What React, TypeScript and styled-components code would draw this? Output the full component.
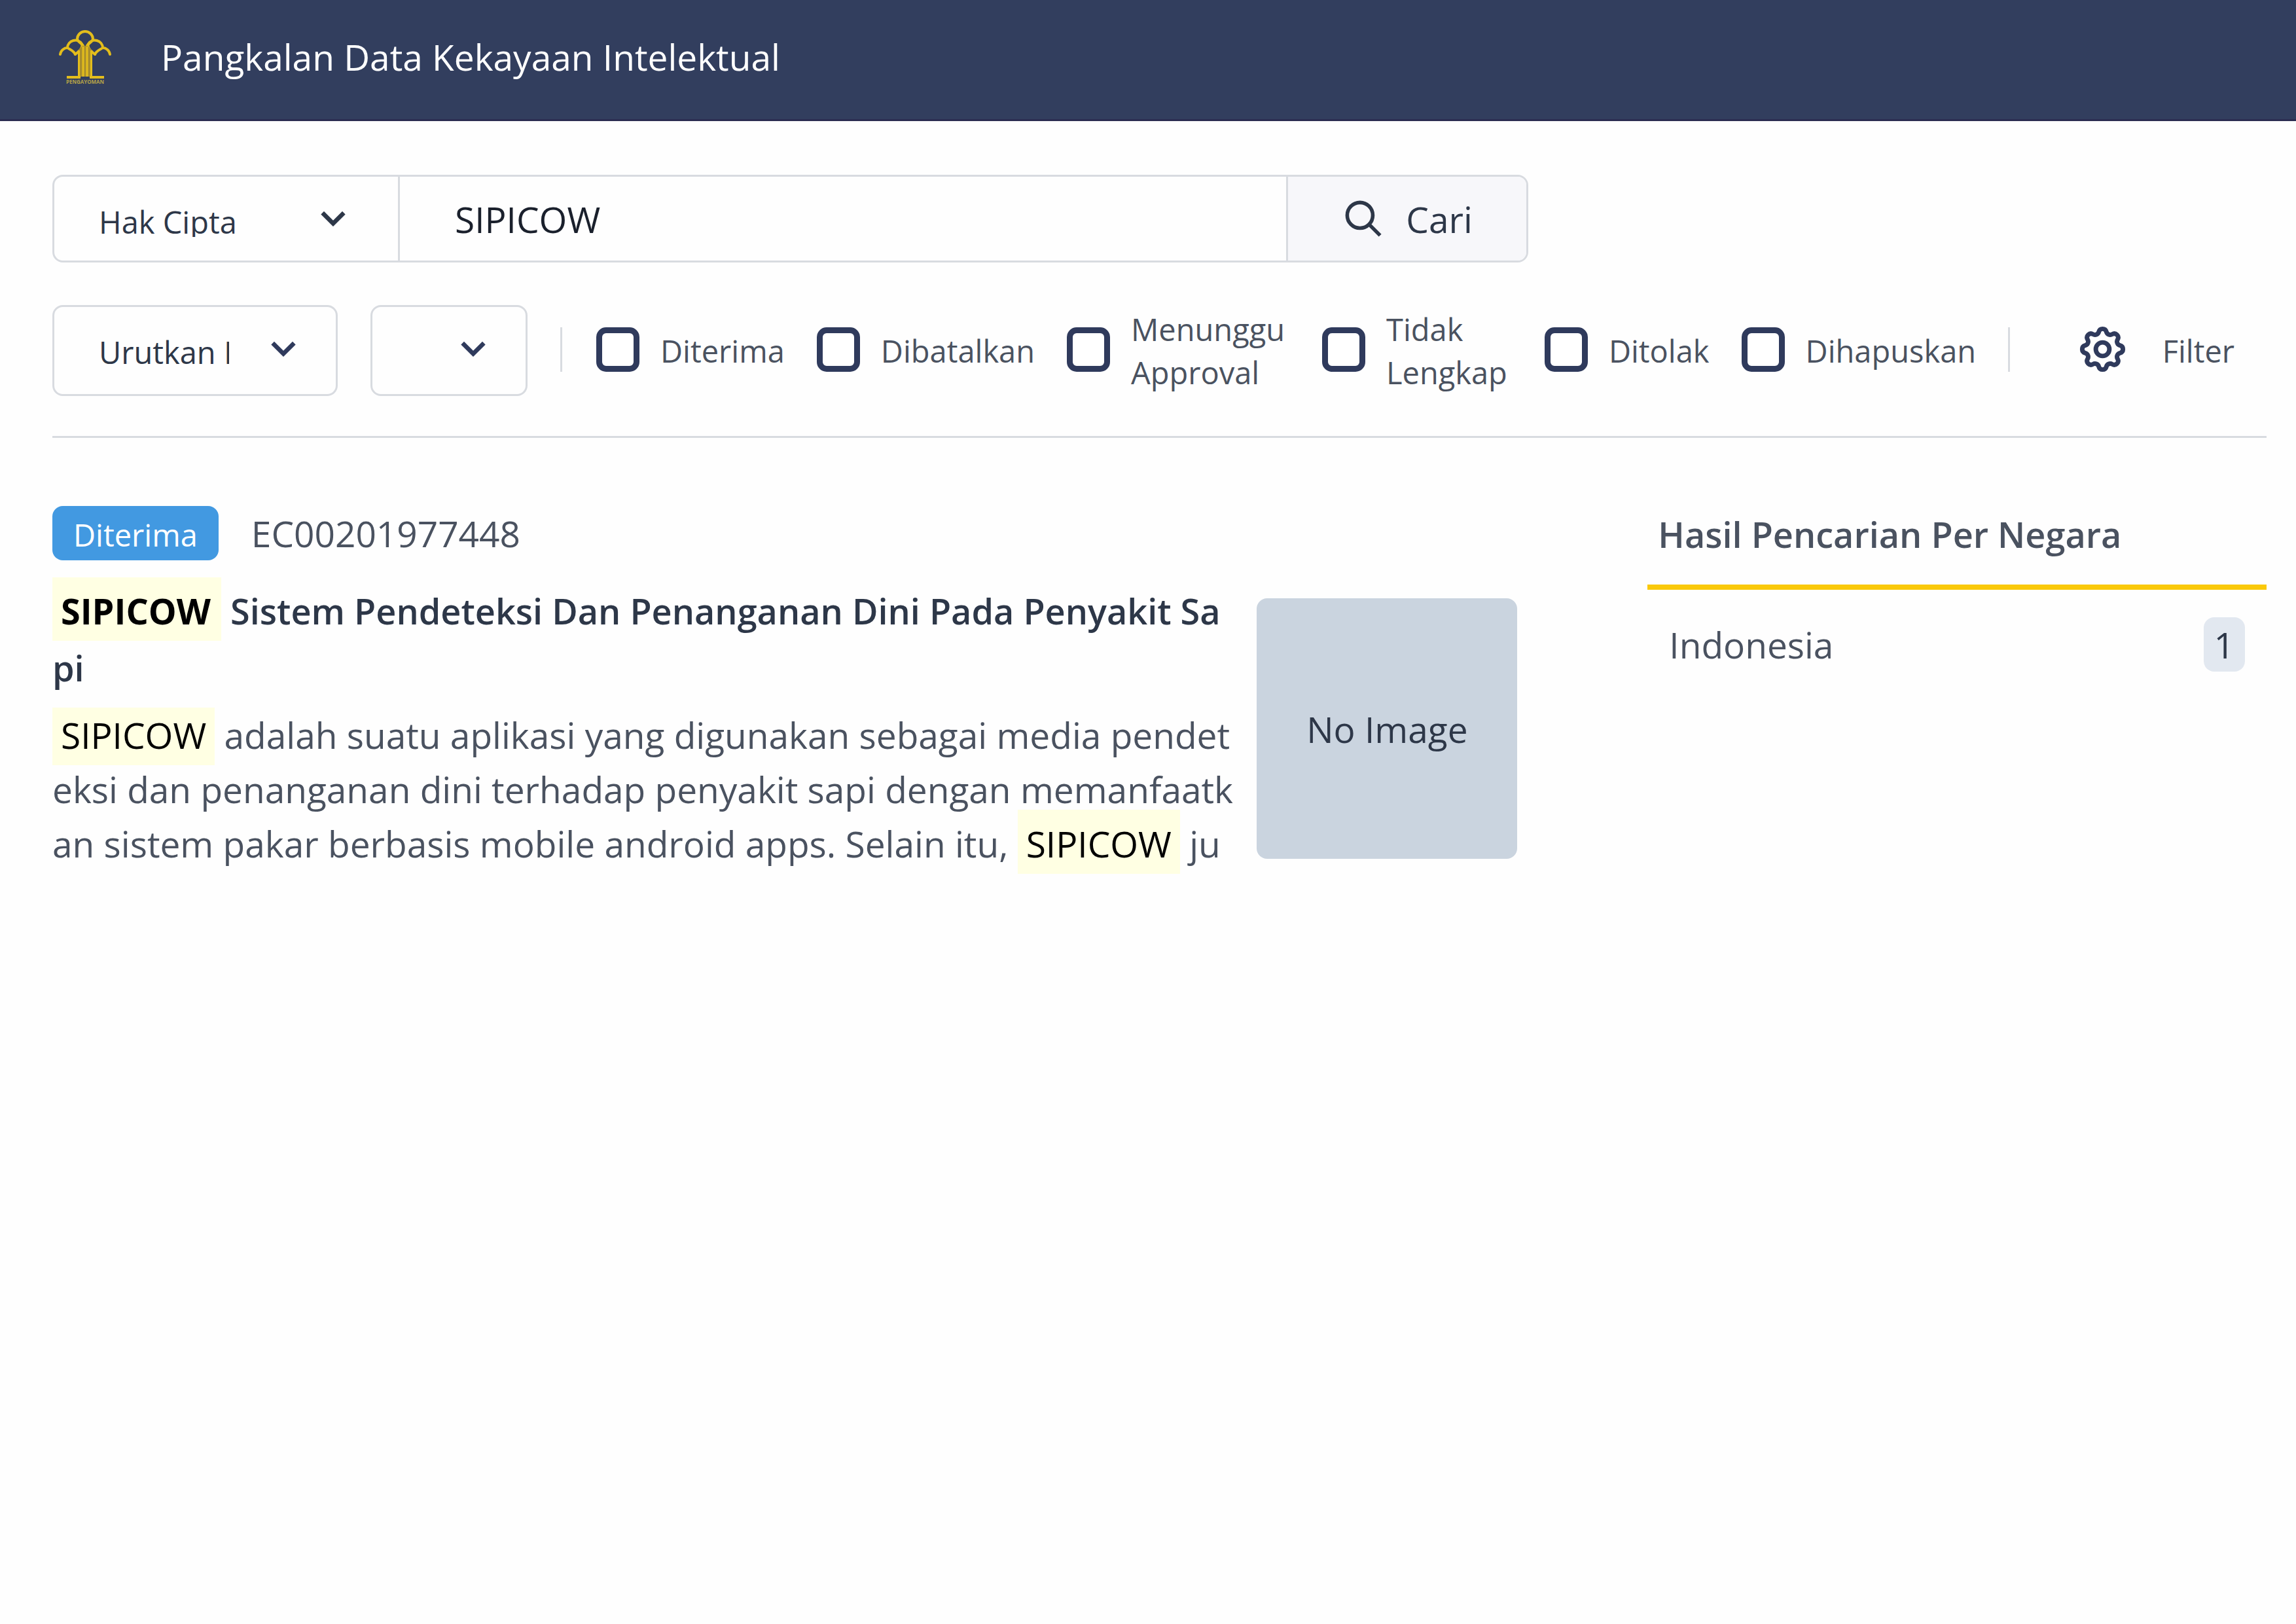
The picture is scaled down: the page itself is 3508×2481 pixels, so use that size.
import React from "react";
import styled, { createGlobalStyle } from "styled-components";

const ink = "#2d3748";
const muted = "#4a5260";
const navy = "#2f3a5c";
const line = "#d8dbe0";
const fontStack = '"Open Sans", "Noto Sans", sans-serif';

const GlobalStyle = createGlobalStyle`
  *, *::before, *::after { box-sizing: border-box; }
  body {
    margin: 0;
    background: #fefefe;
    color: ${ink};
    font-family: ${fontStack};
    font-size: 55px;
    line-height: 83px;
  }
  h1, h2, h3, p, ul { margin: 0; padding: 0; }
  button, input, select { font-family: inherit; margin: 0; }
`;

const Header = styled.header`
  display: flex;
  align-items: center;
  gap: 74px;
  padding: 45px 90px 54px;
  background: #323e5e;
  border-bottom: 3px solid #2b2d52;
`;

const Emblem = styled.svg`
  flex: none;
  width: 82px;
  height: 82px;
`;

const SiteTitle = styled.h1`
  color: #fff;
  font-size: 55px;
  font-weight: 400;
`;

const Main = styled.main`
  padding: 82px 45px 80px 80px;
`;

const SearchForm = styled.form`
  display: flex;
  width: calc(100% * 2 / 3);
  height: 134px;
  border: 3px solid ${line};
  border-radius: 16px;
  overflow: hidden;
`;

const SelectShell = styled.div<{ $width: number; $framed?: boolean }>`
  position: relative;
  flex: none;
  width: ${(p) => p.$width}px;
  height: ${(p) => (p.$framed ? "139px" : "100%")};
  border: ${(p) => (p.$framed ? `3px solid ${line}` : "0")};
  border-radius: ${(p) => (p.$framed ? "16px" : "0")};
`;

const SelectBox = styled.select<{ $end: number }>`
  appearance: none;
  display: block;
  width: 100%;
  height: 128px;
  padding: 37px ${(p) => p.$end}px 36px 68px;
  border: 0;
  background: transparent;
  color: ${ink};
  font-size: 47px;
`;

const SelectArrow = styled.svg<{ $right: number }>`
  position: absolute;
  top: 31px;
  right: ${(p) => p.$right}px;
  width: 66px;
  height: 66px;
  pointer-events: none;
`;

const SearchInput = styled.input`
  flex: 1;
  min-width: 0;
  padding: 0 84px;
  border: 0;
  border-left: 3px solid ${line};
  border-right: 3px solid ${line};
  background: transparent;
  color: #1a202c;
  font-size: 55px;
`;

const SearchButton = styled.button`
  display: flex;
  align-items: center;
  gap: 31px;
  flex: none;
  width: 364px;
  padding: 0 82px;
  border: 0;
  background: #f7f7fa;
  color: ${ink};
  font-size: 55px;
  line-height: 83px;
`;

const SearchIcon = styled.svg`
  flex: none;
  width: 67px;
  height: 67px;
`;

const FilterBar = styled.div`
  display: flex;
  align-items: center;
  gap: 50px;
  margin-top: 65px;
  padding-bottom: 61px;
  border-bottom: 3px solid ${line};
`;

const Divider = styled.span`
  flex: none;
  width: 3px;
  height: 68px;
  margin-bottom: 4px;
  background: ${line};
`;

const Statuses = styled.div`
  display: flex;
  align-items: center;
  gap: 49px;
  padding-left: 2px;
`;

const StatusLabel = styled.label<{ $wrap: boolean }>`
  display: flex;
  align-items: center;
  gap: 32px;
  padding-right: ${(p) => (p.$wrap ? "8px" : "0")};
  color: ${muted};
  font-size: 47px;
  line-height: 66px;
`;

const StatusText = styled.span<{ $wrap: boolean }>`
  width: ${(p) => (p.$wrap ? "min-content" : "auto")};
`;

const Checkbox = styled.input`
  appearance: none;
  flex: none;
  width: 66px;
  height: 68px;
  margin: 0 0 4px;
  border: 9px solid ${navy};
  border-radius: 15px;
  background: #fff;

  &:checked { background: ${navy}; }
`;

const FilterButton = styled.button`
  display: flex;
  align-items: center;
  gap: 50px;
  margin-left: auto;
  padding: 0 49px 0 0;
  border: 0;
  background: transparent;
  color: ${muted};
  font-size: 47px;
  line-height: 66px;
`;

const CogIcon = styled.svg`
  flex: none;
  width: 83px;
  height: 83px;
  margin-bottom: 4px;
`;

const Columns = styled.div`
  display: grid;
  grid-template-columns: 2fr 1fr;
  align-items: start;
  padding-top: 104px;
`;

const Result = styled.article`
  padding-right: 17px;
`;

const ResultMeta = styled.div`
  display: flex;
  align-items: center;
  gap: 50px;
  color: ${muted};
`;

const StatusBadge = styled.span`
  padding: 6px 32px 0;
  border-radius: 16px;
  background: #4299e1;
  color: #fff;
  font-size: 47px;
  line-height: 77px;
`;

const ResultBody = styled.div`
  display: flex;
  align-items: flex-start;
  gap: 32px;
  margin-top: 34px;
`;

const ResultText = styled.div`
  flex: 1;
  min-width: 0;
  word-break: break-all;
`;

const ResultTitle = styled.h2`
  color: ${ink};
  font-size: 54px;
  font-weight: 600;
  line-height: 87px;
`;

const Abstract = styled.p`
  margin-top: 17px;
  padding-bottom: 5px;
  overflow: hidden;
  color: ${muted};
`;

const Highlight = styled.mark`
  padding: 14px 13px 9px;
  background: #ffffe3;
  color: #000;

  ${ResultTitle} & {
    padding: 14px 16px 9px 13px;
    font-weight: 700;
  }
`;

const Placeholder = styled.div`
  display: flex;
  flex: none;
  align-items: center;
  justify-content: center;
  width: 398px;
  height: 398px;
  margin-top: 24px;
  border-radius: 16px;
  background: #cad4df;
  color: ${ink};
`;

const Sidebar = styled.aside`
  padding-left: 182px;
`;

const SidebarTitle = styled.h3`
  padding: 0 16px 33px;
  border-bottom: 8px solid #fac90a;
  color: ${muted};
  font-size: 54px;
  font-weight: 600;
  line-height: 87px;
`;

const CountryList = styled.ul`
  padding: 42px 33px 0;
  list-style: none;
`;

const Country = styled.li`
  display: flex;
  justify-content: space-between;
  color: ${muted};
`;

const Count = styled.span`
  padding: 0 16px;
  border-radius: 16px;
  background: #e2e8f0;
  color: ${ink};
`;

type PickerProps = {
  label: string;
  options: string[];
  width: number;
  end: number;
  arrowRight: number;
  arrowColor: string;
  framed?: boolean;
};

function Picker({ label, options, width, end, arrowRight, arrowColor, framed }: PickerProps) {
  return (
    <SelectShell $width={width} $framed={framed}>
      <SelectBox aria-label={label} $end={end}>
        {options.map((option) => (
          <option key={option}>{option}</option>
        ))}
      </SelectBox>
      <SelectArrow $right={arrowRight} viewBox="0 0 20 20" fill={arrowColor} aria-hidden="true">
        <path d="M9.293 12.95l.707.707L15.657 8l-1.414-1.414L10 10.828 5.757 6.586 4.343 8z" />
      </SelectArrow>
    </SelectShell>
  );
}

function Logo() {
  return (
    <Emblem viewBox="0 0 82 82" fill="none" aria-hidden="true">
      <g stroke="#e3bd1c" strokeWidth="4" strokeLinecap="round">
        <path d="M28 14A12 12 0 0 1 52 14" />
        <path d="M28 14C29 18 35 20 37 24V31" />
        <path d="M52 14C51 18 45 20 43 24V31" />
        <path d="M13 27A12 12 0 0 1 35 21C37 25 34 29 30 33" />
        <path d="M67 27A12 12 0 0 0 45 21C43 25 46 29 50 33" />
        <path d="M13 27C17 30 22 31 25 37" />
        <path d="M67 27C63 30 58 31 55 37" />
        <path d="M2 37C3 31 8 27 13 27" />
        <path d="M78 37C77 31 72 27 67 27" />
        <path d="M25 37L31 32" />
        <path d="M55 37L49 32" />
      </g>
      <path d="M29 31L36 24H44L51 31V71H29Z" fill="#a88d2c" />
      <g stroke="#e3bd1c" strokeWidth="3">
        <path d="M30.5 31V71M37 25V71M43 25V71M49.5 31V71" />
        <path d="M12 72H33M47 72H69" strokeWidth="4" />
      </g>
      <text
        x="40"
        y="82"
        textAnchor="middle"
        fill="#b5a347"
        fontFamily={fontStack}
        fontSize="8"
        fontWeight="700"
      >
        PENGAYOMAN
      </text>
    </Emblem>
  );
}

const statuses = [
  "Diterima",
  "Dibatalkan",
  "Menunggu Approval",
  "Tidak Lengkap",
  "Ditolak",
  "Dihapuskan",
];

export default function App() {
  return (
    <>
      <GlobalStyle />
      <Header>
        <Logo />
        <SiteTitle>Pangkalan Data Kekayaan Intelektual</SiteTitle>
      </Header>
      <Main>
        <SearchForm onSubmit={(event) => event.preventDefault()}>
          <Picker
            label="Jenis"
            options={["Hak Cipta", "Paten", "Merek"]}
            width={525}
            end={140}
            arrowRight={66}
            arrowColor={ink}
          />
          <SearchInput aria-label="Kata kunci" defaultValue="SIPICOW" />
          <SearchButton type="submit">
            <SearchIcon viewBox="0 0 24 24" fill="none" stroke={ink} strokeWidth="2" aria-hidden="true">
              <path d="M21 21l-6-6m2-5a7 7 0 11-14 0 7 7 0 0114 0z" />
            </SearchIcon>
            Cari
          </SearchButton>
        </SearchForm>

        <FilterBar>
          <Picker
            label="Urutkan"
            options={["Urutkan Berdasarkan"]}
            width={436}
            end={163}
            arrowRight={47}
            arrowColor={navy}
            framed
          />
          <Picker
            label="Arah urutan"
            options={[""]}
            width={240}
            end={120}
            arrowRight={47}
            arrowColor={navy}
            framed
          />
          <Divider />
          <Statuses>
            {statuses.map((status) => {
              const wrap = status.includes(" ");
              return (
                <StatusLabel key={status} $wrap={wrap}>
                  <Checkbox type="checkbox" />
                  <StatusText $wrap={wrap}>{status}</StatusText>
                </StatusLabel>
              );
            })}
            <Divider />
          </Statuses>
          <FilterButton type="button">
            <CogIcon
              viewBox="0 0 24 24"
              fill="none"
              stroke={navy}
              strokeWidth="2"
              strokeLinecap="round"
              strokeLinejoin="round"
              aria-hidden="true"
            >
              <path d="M10.325 4.317c.426-1.756 2.924-1.756 3.35 0a1.724 1.724 0 002.573 1.066c1.543-.94 3.31.826 2.37 2.37a1.724 1.724 0 001.065 2.572c1.756.426 1.756 2.924 0 3.35a1.724 1.724 0 00-1.066 2.573c.94 1.543-.826 3.31-2.37 2.37a1.724 1.724 0 00-2.572 1.065c-.426 1.756-2.924 1.756-3.35 0a1.724 1.724 0 00-2.573-1.066c-1.543.94-3.31-.826-2.37-2.37a1.724 1.724 0 00-1.065-2.572c-1.756-.426-1.756-2.924 0-3.35a1.724 1.724 0 001.066-2.573c-.94-1.543.826-3.31 2.37-2.37.996.608 2.296.07 2.572-1.065z" />
              <circle cx="12" cy="12" r="3" />
            </CogIcon>
            Filter
          </FilterButton>
        </FilterBar>

        <Columns>
          <Result>
            <ResultMeta>
              <StatusBadge>Diterima</StatusBadge>
              <span>EC00201977448</span>
            </ResultMeta>
            <ResultBody>
              <ResultText>
                <ResultTitle>
                  <Highlight>SIPICOW</Highlight> Sistem Pendeteksi Dan Penanganan Dini Pada Penyakit Sapi
                </ResultTitle>
                <Abstract>
                  <Highlight>SIPICOW</Highlight> adalah suatu aplikasi yang digunakan sebagai media
                  pendeteksi dan penanganan dini terhadap penyakit sapi dengan memanfaatkan sistem
                  pakar berbasis mobile android apps. Selain itu, <Highlight>SIPICOW</Highlight> ju
                </Abstract>
              </ResultText>
              <Placeholder>No Image</Placeholder>
            </ResultBody>
          </Result>

          <Sidebar>
            <SidebarTitle>Hasil Pencarian Per Negara</SidebarTitle>
            <CountryList>
              <Country>
                <span>Indonesia</span>
                <Count>1</Count>
              </Country>
            </CountryList>
          </Sidebar>
        </Columns>
      </Main>
    </>
  );
}
